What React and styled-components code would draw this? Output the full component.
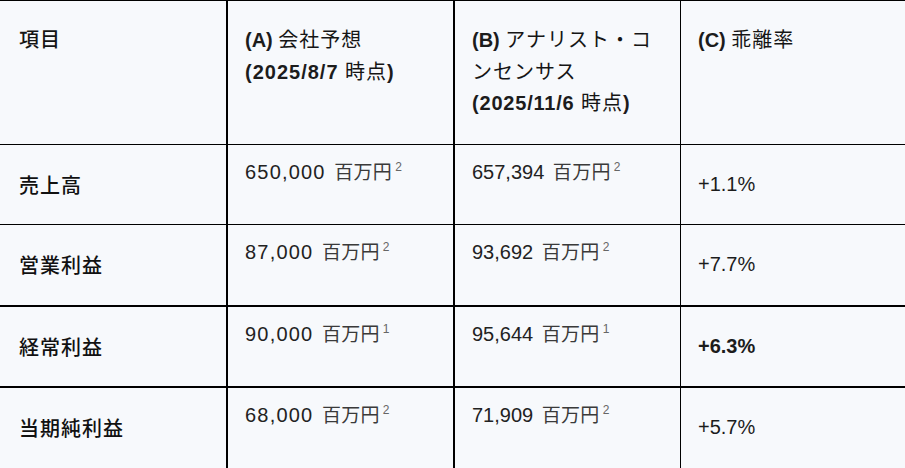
import React from "react";
import styled, { createGlobalStyle } from "styled-components";

const GlobalStyle = createGlobalStyle`
  html, body {
    margin: 0;
    padding: 0;
    background: #f7f9fc;
  }
  body {
    font-family: "Liberation Sans", Arial, "Noto Sans CJK JP", sans-serif;
    color: #1c1c1c;
  }
`;

const Table = styled.table`
  border-collapse: separate;
  border-spacing: 0;
  table-layout: fixed;
  width: 908px;
  background: #f7f9fc;
  border-top: 1px solid #000;
  col:nth-child(1) { width: 228px; }
  col:nth-child(2) { width: 227px; }
  col:nth-child(3) { width: 226px; }
  col:nth-child(4) { width: 227px; }
  th, td {
    border-right: 1px solid #000;
    border-bottom: 1px solid #000;
    padding: 24px 17px;
    line-height: 31.5px;
    font-size: 20px;
    text-align: left;
  }
  th:nth-child(1), th:nth-child(2), td:nth-child(1), td:nth-child(2) {
    border-right-width: 2px;
  }
  tbody tr:nth-child(2) td,
  tbody tr:nth-child(3) td,
  tbody tr:nth-child(4) td {
    border-bottom-width: 2px;
  }
`;

const HeadCell = styled.th`
  vertical-align: top;
  font-weight: 700;
  &:first-child {
    padding-left: 19px;
  }
`;

const Jp = styled.span`
  font-family: "Noto Sans CJK JP", sans-serif;
  font-weight: ${(p) => (p.$bold ? 500 : 400)};
  font-size: 20px;
  line-height: 1;
  letter-spacing: 1px;
  color: #151515;
`;

const Date = styled.span`
  letter-spacing: ${(p) => p.$spacing || "1px"};
`;

const LabelCell = styled.td`
  vertical-align: middle;
  padding-left: 19px !important;
  font-family: "Noto Sans CJK JP", sans-serif;
  font-weight: 500;
  letter-spacing: 1px;
  color: #111;
`;

const ValueCell = styled.td`
  vertical-align: top;
  padding-top: 12px !important;
  color: #222;
`;

const Num = styled.span`
  letter-spacing: ${(p) => (p.$wide ? "1.2px" : "0")};
`;

const Unit = styled.span`
  font-family: "Noto Sans CJK JP", sans-serif;
  font-size: 19px;
  line-height: 1;
  color: #3a3a3a;
  margin-left: 3px;
  letter-spacing: 0.3px;
`;

const Note = styled.sup`
  font-size: 12px;
  line-height: 0;
  color: #666;
  margin-left: 3px;
  vertical-align: 8px;
`;

const RateCell = styled.td`
  vertical-align: middle;
  color: #1c1c1c;
  font-weight: ${(p) => (p.$bold ? 700 : 400)};
`;

const rows = [
  { label: "売上高", a: "650,000", an: 2, b: "657,394", bn: 2, rate: "+1.1%" },
  { label: "営業利益", a: "87,000", an: 2, b: "93,692", bn: 2, rate: "+7.7%" },
  { label: "経常利益", a: "90,000", an: 1, b: "95,644", bn: 1, rate: "+6.3%", bold: true },
  { label: "当期純利益", a: "68,000", an: 2, b: "71,909", bn: 2, rate: "+5.7%" },
];

export default function App() {
  return (
    <>
      <GlobalStyle />
      <Table>
        <colgroup>
          <col />
          <col />
          <col />
          <col />
        </colgroup>
        <thead>
          <tr>
            <HeadCell>
              <Jp $bold>項目</Jp>
            </HeadCell>
            <HeadCell>
              (A) <Jp>会社予想</Jp>
              <br />
              <Date>(2025/8/7 </Date>
              <Jp>時点</Jp>)
            </HeadCell>
            <HeadCell>
              (B) <Jp>アナリスト・コ</Jp>
              <Jp>ンセンサス</Jp>
              <br />
              <Date $spacing="0.8px">(2025/11/6 </Date>
              <Jp>時点</Jp>)
            </HeadCell>
            <HeadCell>
              (C) <Jp>乖離率</Jp>
            </HeadCell>
          </tr>
        </thead>
        <tbody>
          {rows.map((r) => (
            <tr key={r.label}>
              <LabelCell>{r.label}</LabelCell>
              <ValueCell>
                <Num $wide>{r.a}</Num> <Unit>百万円</Unit>
                <Note>{r.an}</Note>
              </ValueCell>
              <ValueCell>
                <Num>{r.b}</Num> <Unit>百万円</Unit>
                <Note>{r.bn}</Note>
              </ValueCell>
              <RateCell $bold={r.bold}>{r.rate}</RateCell>
            </tr>
          ))}
        </tbody>
      </Table>
    </>
  );
}
